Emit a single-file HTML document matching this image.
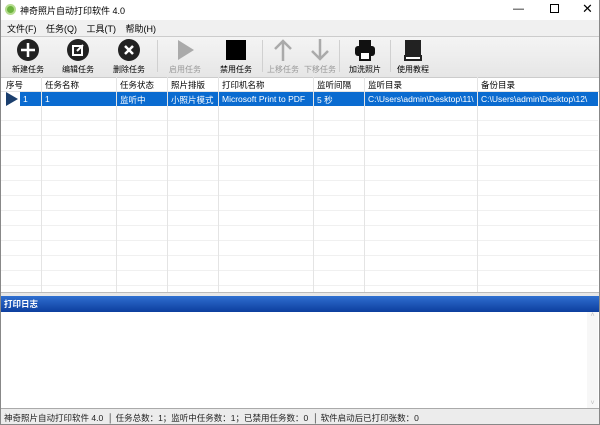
<!DOCTYPE html><html><head><meta charset="utf-8"><style>
*{margin:0;padding:0;box-sizing:border-box}
body{width:600px;height:425px;overflow:hidden;background:#fff;font-family:"Liberation Sans","Noto Sans CJK SC",sans-serif;font-size:9px;color:#000;position:relative}
.a{position:absolute}
.tb{position:absolute;top:38px;width:50px;text-align:center;font-size:8px}
.tb .ic{height:24px;display:flex;justify-content:center;align-items:center}
.tb .l{margin-top:2px}
.dis{color:#999}
.sep{position:absolute;top:40px;width:1px;height:32px;background:#d0d0d0}
.col{position:absolute;top:77px;height:215px;width:1px;background:#e4e4e4}
.h{position:absolute;top:79px;font-size:8.5px}
.c{position:absolute;top:94px;font-size:8.5px;color:#fff}
</style></head><body>
<div class="a" style="left:5px;top:4px;width:11px;height:11px;border-radius:50%;background:#6cb33e;border:2px solid #b5dc8f"></div>
<div class="a" style="left:20px;top:4px;font-size:9px">神奇照片自动打印软件 4.0</div>
<div class="a" style="left:513px;top:3px;font-size:11px">—</div>
<div class="a" style="left:550px;top:4px;width:9px;height:9px;border:1px solid #000"></div>
<div class="a" style="left:582px;top:1px;font-size:13px">✕</div>
<div class="a" style="left:0;top:20px;width:600px;height:16px;background:#f0f0f0"></div>
<div class="a" style="left:7px;top:22px;font-size:9px;word-spacing:7px">文件(F) 任务(Q) 工具(T) 帮助(H)</div>
<div class="a" style="left:0;top:36px;width:600px;height:41px;background:linear-gradient(#f4f4f4,#e6e6e6);border-top:1px solid #ccc"></div>
<div class="tb" style="left:3px"><div class="ic"><svg width="22" height="22"><circle cx="11" cy="11" r="11" fill="#222"/><path d="M11 4v14M4 11h14" stroke="#fff" stroke-width="2.5"/></svg></div><div class="l">新建任务</div></div>
<div class="tb" style="left:53px"><div class="ic"><svg width="22" height="22"><circle cx="11" cy="11" r="11" fill="#222"/><rect x="6" y="7" width="9" height="9" fill="none" stroke="#fff" stroke-width="2"/><path d="M10 12l6-6" stroke="#fff" stroke-width="2"/></svg></div><div class="l">编辑任务</div></div>
<div class="tb" style="left:104px"><div class="ic"><svg width="22" height="22"><circle cx="11" cy="11" r="11" fill="#222"/><path d="M7 7l8 8M15 7l-8 8" stroke="#fff" stroke-width="2.5"/></svg></div><div class="l">删除任务</div></div>
<div class="sep" style="left:157px"></div>
<div class="tb dis" style="left:160px"><div class="ic"><svg width="20" height="22"><path d="M3 1l16 10L3 21z" fill="#aaa"/></svg></div><div class="l">启用任务</div></div>
<div class="tb" style="left:211px"><div class="ic"><svg width="20" height="20"><rect width="20" height="20" fill="#000"/></svg></div><div class="l">禁用任务</div></div>
<div class="sep" style="left:262px"></div>
<div class="tb dis" style="left:258px"><div class="ic"><svg width="20" height="22"><path d="M10 2v20M2 10l8-8 8 8" stroke="#aaa" stroke-width="2.5" fill="none"/></svg></div><div class="l">上移任务</div></div>
<div class="tb dis" style="left:295px"><div class="ic"><svg width="20" height="22"><path d="M10 0v20M2 12l8 8 8-8" stroke="#aaa" stroke-width="2.5" fill="none"/></svg></div><div class="l">下移任务</div></div>
<div class="sep" style="left:339px"></div>
<div class="tb" style="left:340px"><div class="ic"><svg width="22" height="22"><rect x="5" y="1" width="12" height="6" fill="#111"/><rect x="1" y="7" width="20" height="10" rx="3" fill="#111"/><rect x="6" y="13" width="10" height="8" fill="#fff" stroke="#111" stroke-width="2"/></svg></div><div class="l">加洗照片</div></div>
<div class="sep" style="left:390px"></div>
<div class="tb" style="left:388px"><div class="ic"><svg width="20" height="22"><rect x="2" y="1" width="16" height="17" fill="#222"/><rect x="2" y="17" width="16" height="4" fill="#fff" stroke="#222" stroke-width="2"/></svg></div><div class="l">使用教程</div></div>
<div class="a" style="left:0;top:77px;width:600px;height:1px;background:#ccc"></div>
<div class="a" style="left:0;top:91px;width:600px;height:1px;background:#e4e4e4"></div>
<div class="a" style="left:20px;top:92px;width:578px;height:14px;background:#0a6bd0"></div>
<div class="a" style="left:1px;top:106px;width:597px;height:186px;background:repeating-linear-gradient(to bottom,transparent 0,transparent 14px,#f0f0f0 14px,#f0f0f0 15px)"></div>
<div class="col" style="left:41px"></div><div class="col" style="left:116px"></div><div class="col" style="left:167px"></div><div class="col" style="left:218px"></div><div class="col" style="left:313px"></div><div class="col" style="left:364px"></div><div class="col" style="left:477px"></div>
<div class="h" style="left:6px">序号</div><div class="h" style="left:45px">任务名称</div><div class="h" style="left:120px">任务状态</div><div class="h" style="left:171px">照片排版</div><div class="h" style="left:222px">打印机名称</div><div class="h" style="left:317px">监听间隔</div><div class="h" style="left:368px">监听目录</div><div class="h" style="left:481px">备份目录</div>
<svg class="a" style="left:6px;top:92px" width="12" height="14"><path d="M0 0l12 7L0 14z" fill="#1b3f6e"/></svg>
<div class="c" style="left:23px">1</div><div class="c" style="left:45px">1</div><div class="c" style="left:120px">监听中</div><div class="c" style="left:171px">小照片模式</div><div class="c" style="left:222px">Microsoft Print to PDF</div><div class="c" style="left:317px">5 秒</div><div class="c" style="left:368px">C:\Users\admin\Desktop\11\</div><div class="c" style="left:481px">C:\Users\admin\Desktop\12\</div>
<div class="a" style="left:0;top:292px;width:600px;height:4px;background:#e8e8e8;border-top:1px solid #bbb"></div>
<div class="a" style="left:1px;top:296px;width:598px;height:16px;background:linear-gradient(#2f6fd0,#0d3e9e);color:#fff;font-weight:bold;font-size:8.5px;padding:2px 3px">打印日志</div>
<div class="a" style="left:587px;top:312px;width:11px;height:97px;background:#f7f7f7;color:#bbb;font-size:7px;text-align:center">˄<div style="position:absolute;bottom:2px;width:11px">˅</div></div>
<div class="a" style="left:0;top:408px;width:600px;height:17px;background:#ececec;border-top:1px solid #aaa;font-size:8.5px;padding:3px 4px;color:#222">神奇照片自动打印软件 4.0 &nbsp;│ 任务总数：1；监听中任务数：1；已禁用任务数：0 &nbsp;│ 软件启动后已打印张数：0</div>
<div class="a" style="left:0;top:0;width:600px;height:425px;border:1px solid #888;border-top:none"></div>
</body></html>
